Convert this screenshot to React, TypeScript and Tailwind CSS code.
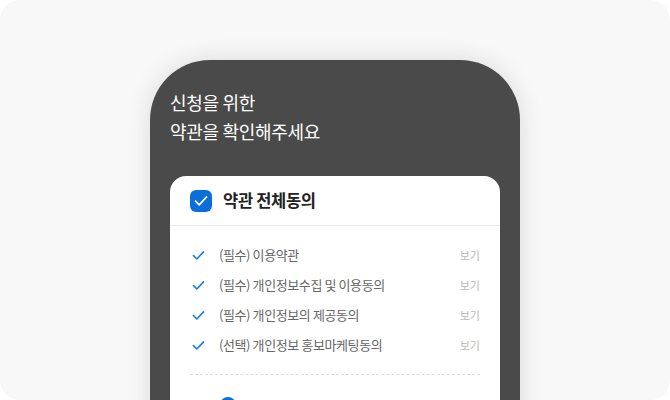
import React from 'react';

const terms = [
  '(필수) 이용약관',
  '(필수) 개인정보수집 및 이용동의',
  '(필수) 개인정보의 제공동의',
  '(선택) 개인정보 홍보마케팅동의',
];

const Check = ({ className = '' }: { className?: string }) => (
  <svg viewBox="0 0 14 12" className={className} fill="none">
    <path d="M1.5 6.2 L5.2 9.8 L12.5 2" stroke="currentColor" strokeWidth="1.8" strokeLinecap="round" strokeLinejoin="round" />
  </svg>
);

export default function App() {
  return (
    <div
      className="w-[670px] h-[400px] bg-white"
      style={{ fontFamily: '"Noto Sans CJK KR", "Noto Sans", sans-serif' }}
    >
      <div className="w-full h-full rounded-[20px] bg-[#f8f8f8] overflow-hidden flex justify-center pt-[60px]">
        <div className="w-[370px] h-[400px] shrink-0 bg-[#4a4a4a] rounded-t-[60px] shadow-[0_0_24px_rgba(0,0,0,0.12)] px-[20px] pt-[28px]">
          <h1 className="text-white text-[18px] leading-[29px] font-normal tracking-[-0.3px]">
            신청을 위한
            <br />
            약관을 확인해주세요
          </h1>
          <div className="mt-[30px] bg-white rounded-t-[16px]">
            <div className="h-[50px] flex items-center px-[20px] gap-[11px] border-b border-[#ebebeb]">
              <span className="w-[22px] h-[22px] rounded-[6px] bg-[#0a6fd8] flex items-center justify-center text-white">
                <Check className="w-[14px] h-[12px]" />
              </span>
              <span className="text-[16.5px] font-bold text-[#222] tracking-[-0.3px]">약관 전체동의</span>
            </div>
            <ul className="px-[20px] py-[14px]">
              {terms.map((t) => (
                <li key={t} className="h-[30px] flex items-center">
                  <Check className="w-[13px] h-[11px] ml-[2px] text-[#1a7ee0]" />
                  <span className="ml-[14px] text-[13px] text-[#666] tracking-[-0.4px]">{t}</span>
                  <span className="ml-auto text-[11px] text-[#bbb]">보기</span>
                </li>
              ))}
            </ul>
            <div className="mx-[20px] border-t border-dashed border-[#dcdcdc]" />
            <div className="px-[20px] pt-[22px] flex items-center">
              <span className="ml-[30px] w-[16px] h-[16px] rounded-full bg-[#0a6fd8]" />
            </div>
          </div>
        </div>
      </div>
    </div>
  );
}
